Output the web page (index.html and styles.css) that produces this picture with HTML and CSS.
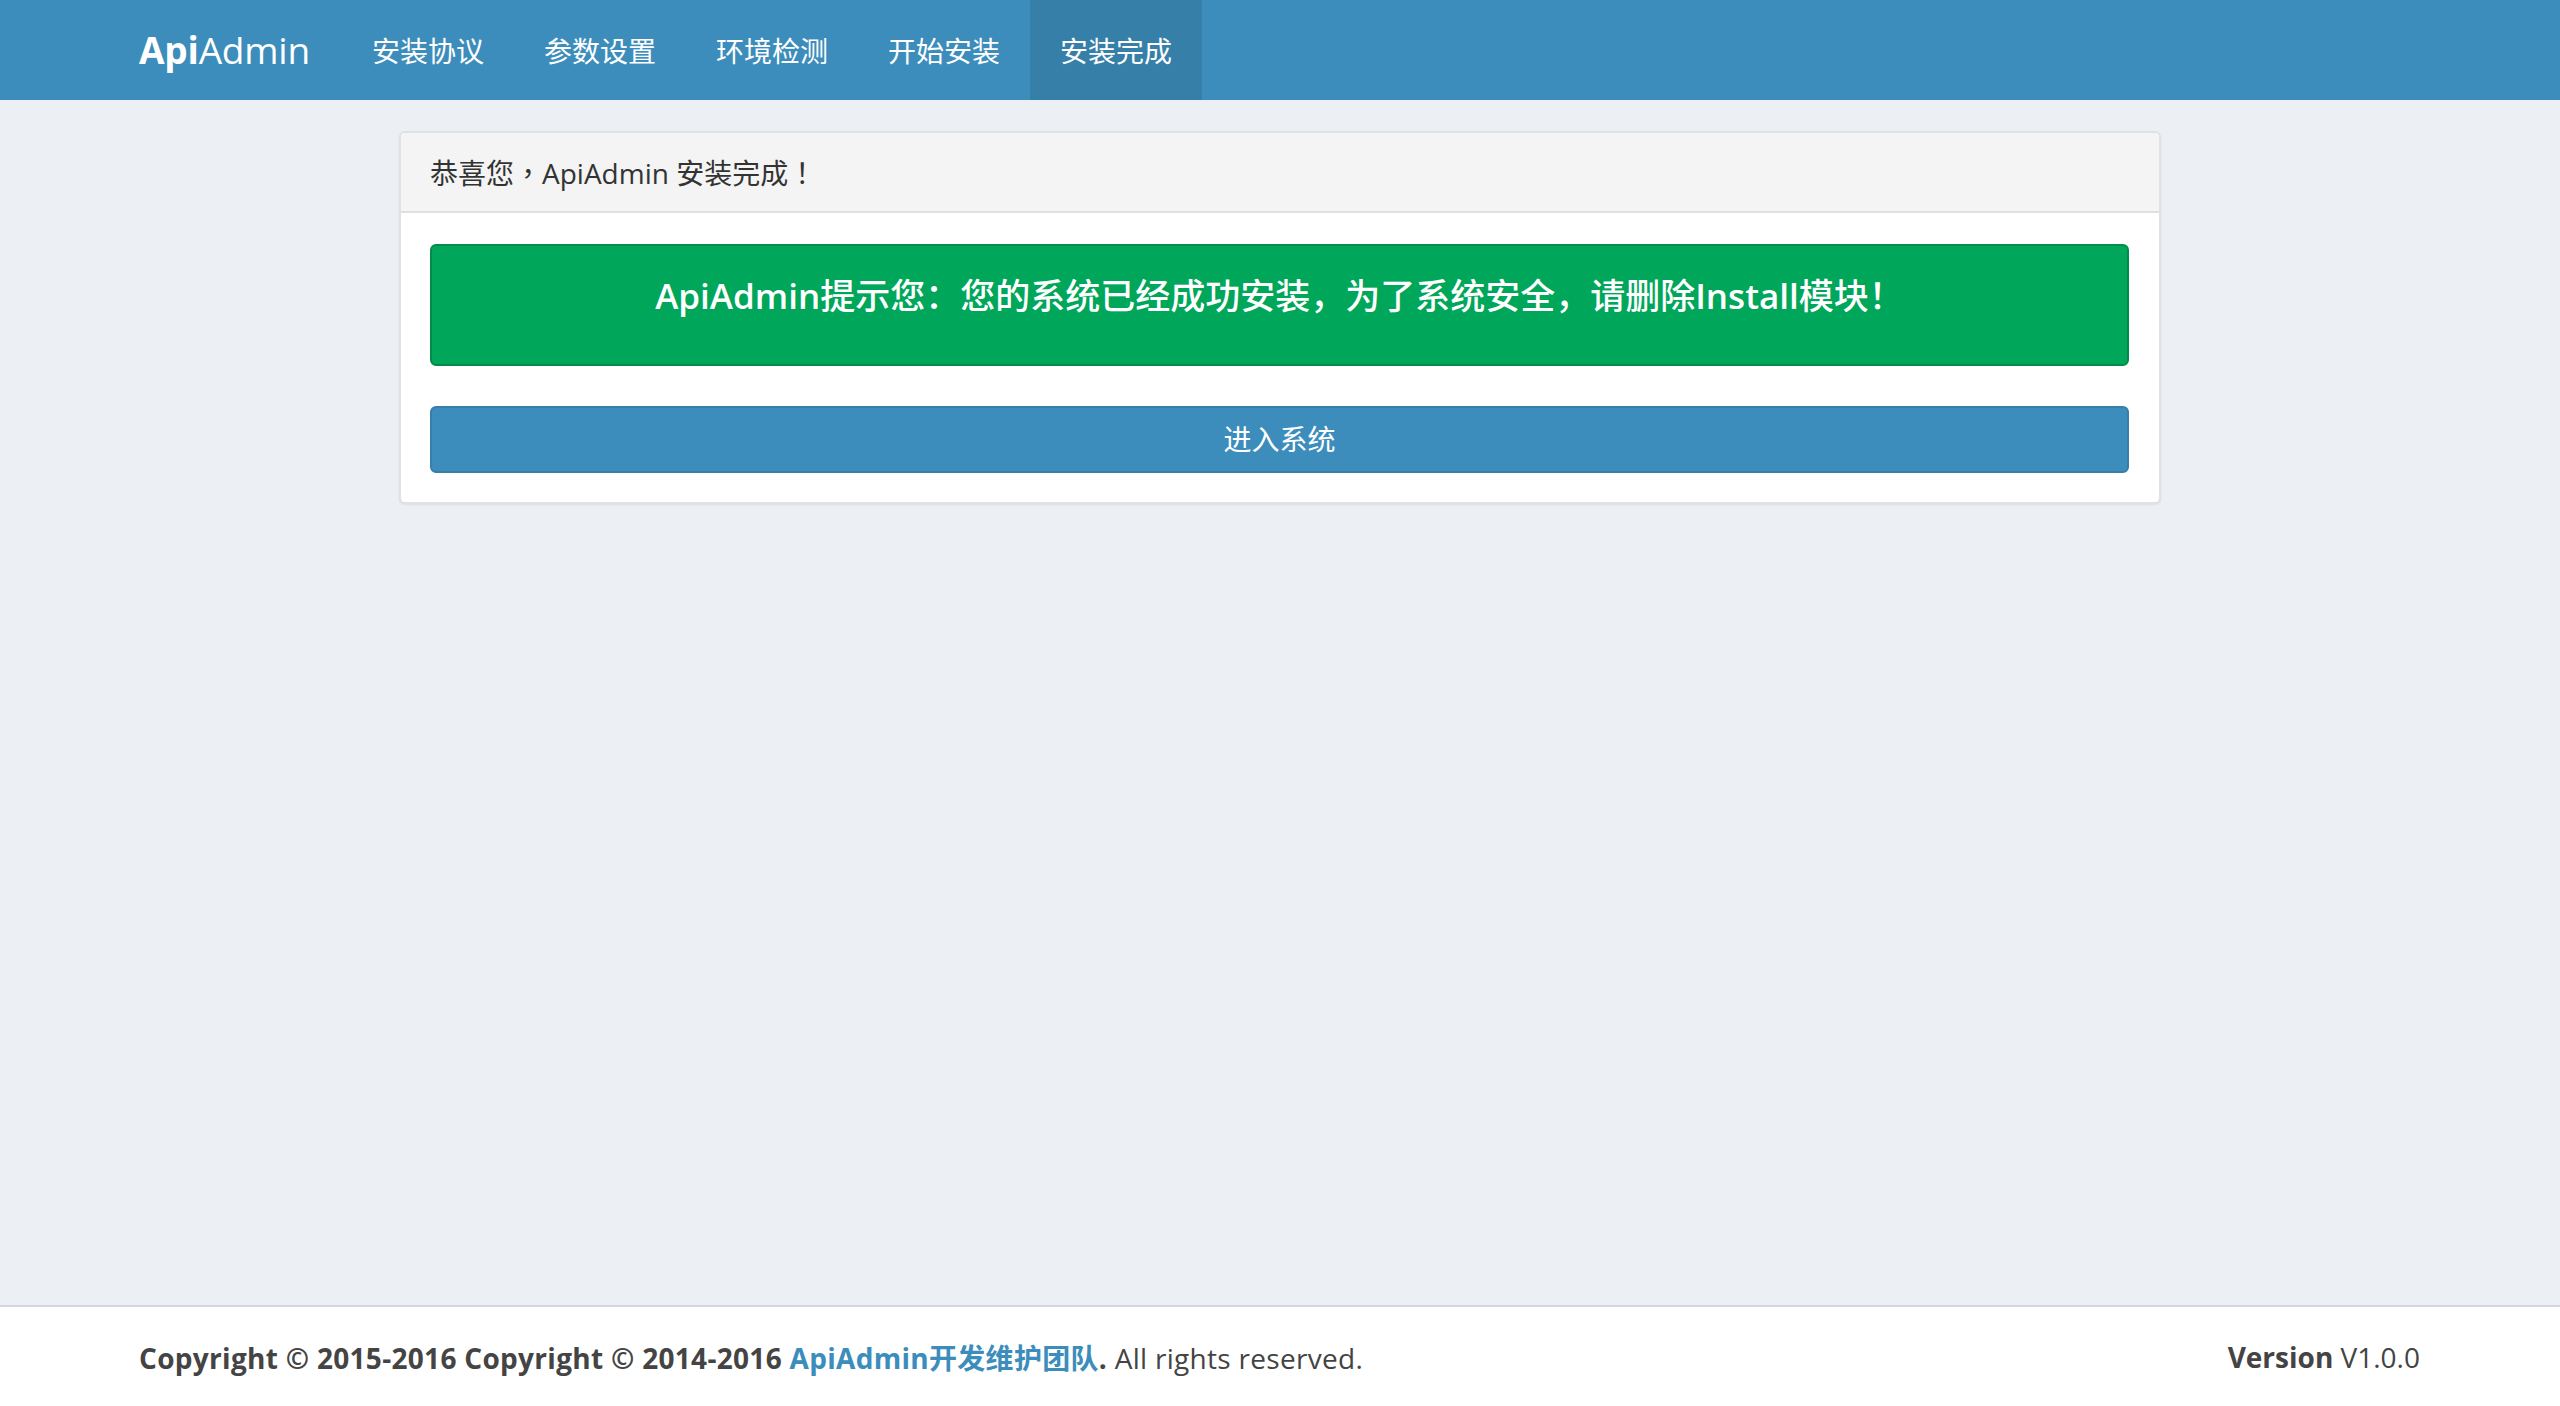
FILE: index.html
```html
<!DOCTYPE html>
<html lang="zh-CN">
<head>
<meta charset="utf-8">
<title>ApiAdmin 安装</title>
<link rel="stylesheet" href="styles.css">
</head>
<body>
<div class="page">
  <header class="navbar">
    <a class="brand" href="#"><b>Api</b>Admin</a>
    <nav class="nav">
      <a class="nav-item" href="#">安装协议</a>
      <a class="nav-item" href="#">参数设置</a>
      <a class="nav-item" href="#">环境检测</a>
      <a class="nav-item" href="#">开始安装</a>
      <a class="nav-item active" href="#">安装完成</a>
    </nav>
  </header>
  <main class="content">
    <section class="box">
      <div class="box-header" lang="zh-TW">恭喜您，ApiAdmin 安装完成！</div>
      <div class="box-body">
        <div class="alert"><span class="latin">ApiAdmin</span>提示您：您的系统已经成功安装，为了系统安全，请删除<span class="latin">Install</span>模块！</div>
        <a class="btn" href="#">进入系统</a>
      </div>
    </section>
  </main>
  <footer class="footer">
    <div class="copy"><strong>Copyright © 2015-2016 Copyright © 2014-2016 <a href="#">ApiAdmin开发维护团队</a>.</strong> All rights reserved.</div>
    <div class="version"><b>Version</b> V1.0.0</div>
  </footer>
</div>
</body>
</html>
```
FILE: styles.css
```css
html, body {
  margin: 0;
  padding: 0;
}
body {
  background: #ecf0f5;
  font-family: "Open Sans", "Noto Sans CJK SC", sans-serif;
  color: #333;
}
a { text-decoration: none; }
.page {
  min-height: 100vh;
  display: flex;
  flex-direction: column;
}
.navbar {
  height: 100px;
  background: #3c8dbc;
  display: flex;
  align-items: stretch;
  padding: 0 139px;
}
.brand {
  color: #fff;
  font-size: 37px;
  display: flex;
  align-items: center;
  width: 203px;
  padding-bottom: 2px;
  letter-spacing: -0.2px;
}
.brand b { font-weight: 700; }
.nav {
  display: flex;
}
.nav-item {
  color: #fff;
  font-size: 28px;
  width: 172px;
  display: flex;
  align-items: center;
  justify-content: center;
  padding-bottom: 1px;
}
.nav-item.active {
  background: #367fa9;
}
.content {
  flex: 1;
  padding-top: 31px;
}
.box {
  width: 1762px;
  margin: 0 auto;
  box-sizing: border-box;
  background: #fff;
  border: 2px solid #dfe1e4;
  border-radius: 6px;
  box-shadow: 0 1px 2px rgba(0, 0, 0, 0.08);
}
.box-header {
  background: #f4f4f4;
  border-bottom: 2px solid #dfe0e2;
  border-radius: 5px 5px 0 0;
  height: 78px;
  box-sizing: content-box;
  display: flex;
  align-items: center;
  padding: 0 29px;
  font-family: "Open Sans", "Noto Sans CJK TC", sans-serif;
  font-size: 28px;
  color: #333;
}
.box-body {
  padding: 31px 30px 29px 29px;
  display: flex;
  flex-direction: column;
}
.alert {
  background: #00a65a;
  border: 2px solid #008d4c;
  border-radius: 6px;
  color: #fff;
  font-size: 35px;
  font-weight: 500;
  text-align: center;
  line-height: 39px;
  padding: 30px 20px 49px;
  margin-bottom: 40px;
}
.alert .latin { font-weight: 600; }
.btn {
  display: block;
  background: #3c8dbc;
  border: 2px solid #367fa9;
  border-radius: 6px;
  color: #fff;
  font-size: 28px;
  text-align: center;
  line-height: 39px;
  padding: 12px 0;
}
.footer {
  height: 101px;
  box-sizing: border-box;
  background: #fff;
  border-top: 2px solid #d2d6de;
  display: flex;
  align-items: center;
  justify-content: space-between;
  padding: 0 140px 0 139px;
  font-size: 28px;
  color: #444;
}
.copy { letter-spacing: 0.3px; }
.footer strong, .footer b { font-weight: 700; }
.footer a { color: #3c8dbc; }
```
